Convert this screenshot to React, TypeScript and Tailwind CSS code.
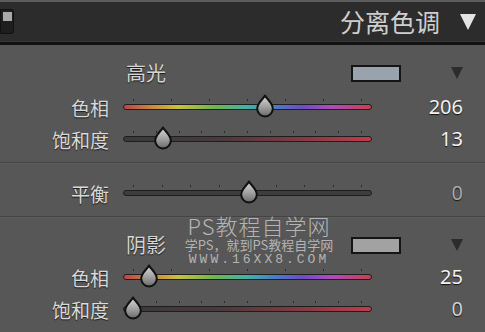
import React from 'react';

const CJK = "font-['Noto_Sans_CJK_SC','Noto_Sans',sans-serif]";

type TrackKind = 'hue' | 'sat' | 'balance';

const trackClass: Record<TrackKind, string> = {
  hue: 'bg-[linear-gradient(to_right,#c0444a_0%,#cf8a3c_12%,#c9c040_22%,#6fb64a_36%,#3fb3a8_50%,#4a78c8_62%,#6a4ec8_72%,#b04ac0_84%,#c8404e_100%)]',
  sat: 'bg-[linear-gradient(to_right,#3a3a3a_0%,#4a3a3c_40%,#8a3a44_75%,#c03c4c_100%)]',
  balance: 'bg-[#3d3d3d]',
};

function Thumb() {
  return (
    <svg width="20" height="24" viewBox="0 0 20 24" className="block">
      <defs>
        <linearGradient id="thumbFill" x1="0" y1="0" x2="0" y2="1">
          <stop offset="0" stopColor="#d8d8d8" />
          <stop offset="0.55" stopColor="#a0a0a0" />
          <stop offset="1" stopColor="#6a6a6a" />
        </linearGradient>
      </defs>
      <path
        d="M10 1.5 C11.8 5 17.8 9 17.8 14.6 A7.8 7.8 0 0 1 2.2 14.6 C2.2 9 8.2 5 10 1.5 Z"
        fill="url(#thumbFill)"
        stroke="#111"
        strokeWidth="2"
        strokeLinejoin="round"
      />
    </svg>
  );
}

interface SliderRowProps {
  label: string;
  value: string;
  position: number;
  kind: TrackKind;
  ticks: number;
  valueClass?: string;
}

function SliderRow({
  label,
  value,
  position,
  kind,
  ticks,
  valueClass = 'text-[#f2f2f2]',
}: SliderRowProps) {
  return (
    <div className="flex h-[32px] items-center">
      <div
        className={`w-[109px] text-right text-[19px] leading-none text-[#d9d9d9] [text-shadow:0_1px_1px_rgba(0,0,0,0.7)] ${CJK}`}
      >
        {label}
      </div>
      <div className="relative ml-[14px] h-[32px] w-[249px]">
        <div className="absolute left-[10px] right-[10px] top-[8px] flex justify-between">
          {Array.from({ length: ticks }).map((_, i) => (
            <span key={i} className="h-[2px] w-[1px] bg-[#2a2a2a]" />
          ))}
        </div>
        <div
          className={`absolute left-0 right-0 top-[13px] h-[6px] rounded-full border border-[#1e1e1e] ${trackClass[kind]}`}
        />
        <div
          className="absolute top-[3px] -translate-x-1/2"
          style={{ left: `${10 + position * 231}px` }}
        >
          <Thumb />
        </div>
      </div>
      <div
        className={`ml-auto mr-[22px] text-[20px] leading-none [text-shadow:0_1px_1px_rgba(0,0,0,0.8)] font-['Noto_Sans',sans-serif] ${valueClass}`}
      >
        {value}
      </div>
    </div>
  );
}

function SectionHeading({ title, swatch }: { title: string; swatch: string }) {
  return (
    <div className="flex h-[22px] items-center">
      <div
        className={`ml-[126px] text-[20px] leading-none text-[#d4d4d4] [text-shadow:0_1px_1px_rgba(0,0,0,0.7)] ${CJK}`}
      >
        {title}
      </div>
      <div
        className={`ml-auto h-[17px] w-[50px] border-2 border-[#151515] ${swatch}`}
      />
      <div className="ml-[50px] mr-[22px] h-0 w-0 border-x-[6px] border-t-[12px] border-x-transparent border-t-[#2c2c2c]" />
    </div>
  );
}

export default function App() {
  return (
    <div className="relative h-[332px] w-[485px] overflow-hidden bg-[#575757] select-none">
      <div className="h-[2px] bg-[#5c5c5c]" />
      <div className="flex h-[40px] items-center border-b border-[#3a3a3a] bg-[#2c2c2c]">
        <div className="relative h-[25px] w-[14px] rounded-r-[3px] border border-[#111] bg-[#1e1e1e]">
          <div className="absolute left-[2px] top-[2px] h-[9px] w-[9px] bg-[#a8a8a8]" />
        </div>
        <div className={`ml-auto text-[25px] leading-none text-[#cfcfcf] ${CJK}`}>
          分离色调
        </div>
        <div className="ml-[20px] mr-[9px] h-0 w-0 border-x-[8px] border-t-[16px] border-x-transparent border-t-[#e4e4e4]" />
      </div>
      <div className="h-[3px] bg-[#121212]" />

      <div className="pt-[17px]">
        <SectionHeading title="高光" swatch="bg-[#99a3ad]" />
        <div className="h-[7px]" />
        <SliderRow label="色相" value="206" position={206 / 360} kind="hue" ticks={7} />
        <SliderRow label="饱和度" value="13" position={0.13} kind="sat" ticks={11} />
      </div>
      <div className="mt-[7px] h-px bg-[#444]" />
      <div className="h-px bg-[#5e5e5e]" />

      <div className="pt-[13px] pb-[7px]">
        <SliderRow
          label="平衡"
          value="0"
          position={0.5}
          kind="balance"
          ticks={9}
          valueClass="text-[#a9a9a9]"
        />
      </div>
      <div className="h-px bg-[#444]" />
      <div className="h-px bg-[#5e5e5e]" />

      <div className="pt-[16px]">
        <SectionHeading title="阴影" swatch="bg-[#a2a2a2]" />
        <div className="h-[5px]" />
        <SliderRow label="色相" value="25" position={25 / 360} kind="hue" ticks={7} />
        <SliderRow
          label="饱和度"
          value="0"
          position={0}
          kind="sat"
          ticks={11}
          valueClass="text-[#cfcfcf]"
        />
      </div>

      <div
        className={`pointer-events-none absolute left-[178px] top-[213px] flex w-[162px] flex-col items-center whitespace-nowrap text-[#b4b4b4] ${CJK}`}
      >
        <div className="text-[22px] font-light leading-[24px] tracking-[1px]">PS教程自学网</div>
        <div className="text-[13px] leading-[15px]">学PS，就到PS教程自学网</div>
        <div className="mt-[1px] font-['Liberation_Mono',monospace] text-[13px] leading-[14px] tracking-[3px]">
          WWW.16XX8.COM
        </div>
      </div>
    </div>
  );
}
